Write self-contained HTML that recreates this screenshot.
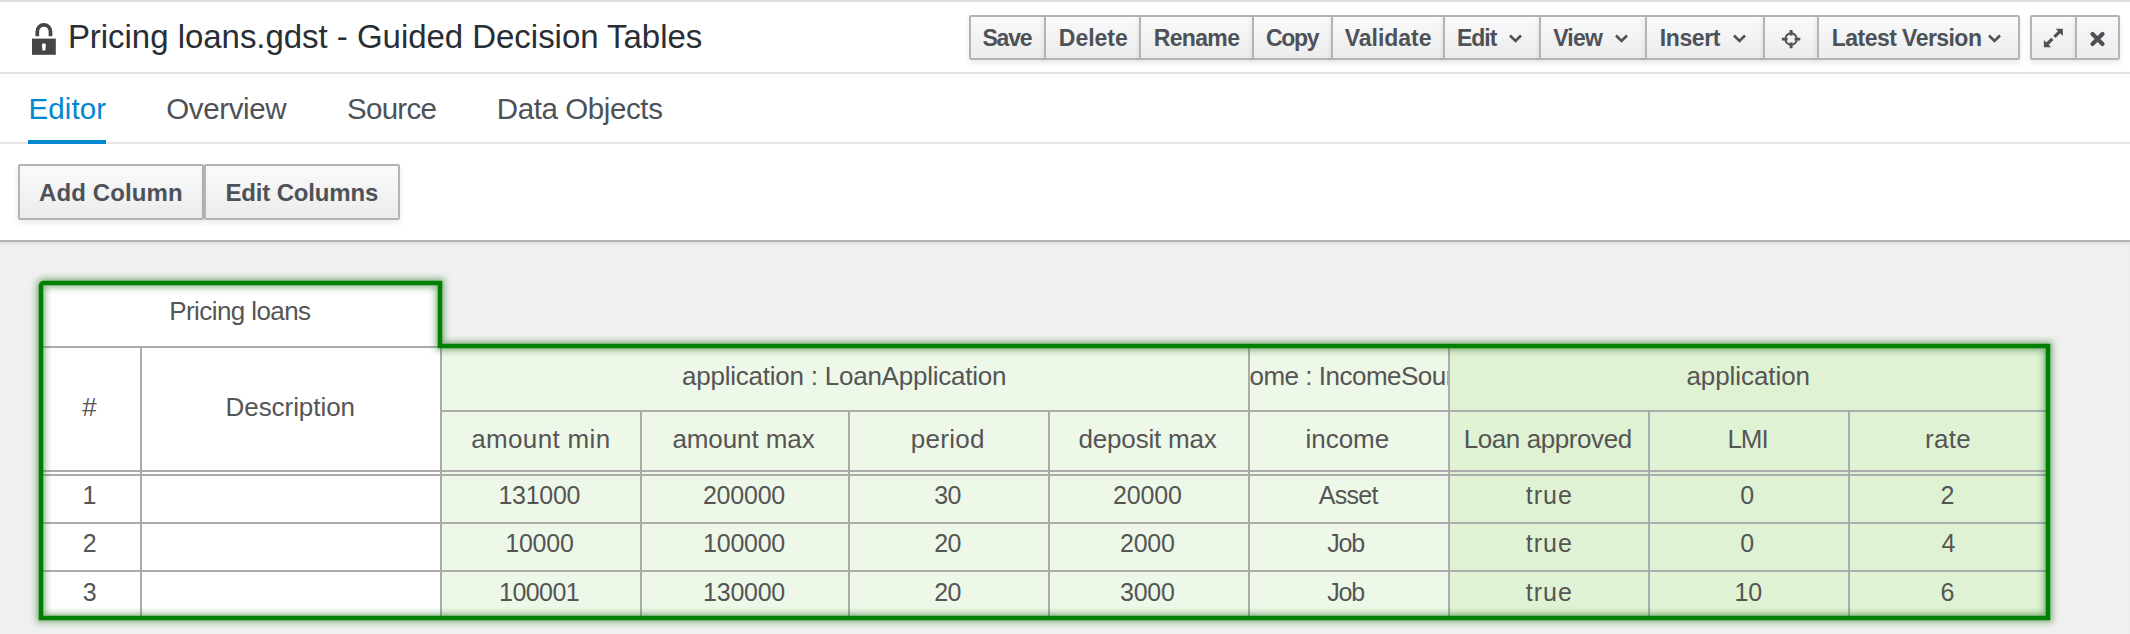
<!DOCTYPE html><html><head><meta charset="utf-8"><style>
*{box-sizing:border-box}
html,body{margin:0;padding:0}
body{width:2130px;height:634px;position:relative;overflow:hidden;background:#fff;font-family:"Liberation Sans",sans-serif}
.a{position:absolute}
.t{position:absolute;white-space:nowrap;line-height:1}
.b{position:absolute;border:2px solid #b4b4b4;background:linear-gradient(#fafafa,#ececec);box-shadow:0 3px 6px rgba(0,0,0,0.09)}
.bl{position:absolute;white-space:nowrap;line-height:1;color:#4d5258;font-weight:bold;font-size:23px}
</style></head><body>
<div class="a" style="left:0;top:0;width:2130px;height:2px;background:#dcdcdc"></div>
<div class="a" style="left:0;top:72px;width:2130px;height:2px;background:#e3e3e3"></div>
<svg class="a" style="left:0;top:0" width="70" height="70" viewBox="0 0 70 70">
<defs><filter id="lb" x="-50%" y="-50%" width="200%" height="200%"><feGaussianBlur stdDeviation="0.55"/></filter></defs>
<g filter="url(#lb)">
<path d="M37.3 36.2 V31.4 A6.6 6.6 0 0 1 50.5 31.4 V36.2" fill="none" stroke="#444" stroke-width="3.7"/>
<rect x="32" y="38.6" width="23.8" height="16.2" fill="#444"/>
<path d="M43.9 43.3 a2 2 0 0 1 2 2 L45.3 50.5 H42.5 L41.9 45.3 a2 2 0 0 1 2 -2 Z" fill="#fff"/>
</g>
</svg>
<div class="t" style="left:67.9px;top:20px;font-size:33px;letter-spacing:-0.036px;color:#292e34">Pricing loans.gdst - Guided Decision Tables</div>
<div class="b" style="left:969px;top:15px;width:77px;height:45px;border-radius:2px 0 0 2px"></div>
<div class="b" style="left:1044px;top:15px;width:97px;height:45px;border-radius:0"></div>
<div class="b" style="left:1139px;top:15px;width:115px;height:45px;border-radius:0"></div>
<div class="b" style="left:1252px;top:15px;width:81px;height:45px;border-radius:0"></div>
<div class="b" style="left:1331px;top:15px;width:114px;height:45px;border-radius:0"></div>
<div class="b" style="left:1443px;top:15px;width:98px;height:45px;border-radius:0"></div>
<div class="b" style="left:1539px;top:15px;width:108px;height:45px;border-radius:0"></div>
<div class="b" style="left:1645px;top:15px;width:120px;height:45px;border-radius:0"></div>
<div class="b" style="left:1763px;top:15px;width:56px;height:45px;border-radius:0"></div>
<div class="b" style="left:1817px;top:15px;width:203px;height:45px;border-radius:0 2px 2px 0"></div>
<div class="bl" style="left:982.5px;top:27px;letter-spacing:-1.233px">Save</div>
<div class="bl" style="left:1058.8px;top:27px;letter-spacing:-0.02px">Delete</div>
<div class="bl" style="left:1153.7px;top:27px;letter-spacing:-0.64px">Rename</div>
<div class="bl" style="left:1266.1px;top:27px;letter-spacing:-1.367px">Copy</div>
<div class="bl" style="left:1344.8px;top:27px;letter-spacing:-0.043px">Validate</div>
<div class="bl" style="left:1457.1px;top:27px;letter-spacing:-1.067px">Edit</div>
<svg class="a" style="left:1508px;top:30px" width="16" height="16" viewBox="0 0 16 16"><path d="M2 5.5 L7.5 11 L13 5.5" fill="none" stroke="#4d5258" stroke-width="2.6"/></svg>
<div class="bl" style="left:1553.2px;top:27px;letter-spacing:-0.8px">View</div>
<svg class="a" style="left:1614px;top:30px" width="16" height="16" viewBox="0 0 16 16"><path d="M2 5.5 L7.5 11 L13 5.5" fill="none" stroke="#4d5258" stroke-width="2.6"/></svg>
<div class="bl" style="left:1659.7px;top:27px;letter-spacing:-0.36px">Insert</div>
<svg class="a" style="left:1732px;top:30px" width="16" height="16" viewBox="0 0 16 16"><path d="M2 5.5 L7.5 11 L13 5.5" fill="none" stroke="#4d5258" stroke-width="2.6"/></svg>
<div class="bl" style="left:1831.8px;top:27px;letter-spacing:-0.546px">Latest Version</div>
<svg class="a" style="left:1987px;top:30px" width="16" height="16" viewBox="0 0 16 16"><path d="M2 5.5 L7.5 11 L13 5.5" fill="none" stroke="#4d5258" stroke-width="2.6"/></svg>
<svg class="a" style="left:1771px;top:19px" width="40" height="40" viewBox="0 0 40 40">
<circle cx="20.1" cy="20.1" r="5.8" fill="none" stroke="#4d5258" stroke-width="1.9"/>
<path d="M20.1 10.9 V16.6 M20.1 23.6 V29.3 M10.9 20.1 H16.6 M23.6 20.1 H29.3" stroke="#4d5258" stroke-width="2.9"/>
</svg>
<div class="b" style="left:2030px;top:15px;width:47px;height:45px;border-radius:2px 0 0 2px"></div>
<div class="b" style="left:2075px;top:15px;width:45px;height:45px;border-radius:0 2px 2px 0"></div>
<svg class="a" style="left:2036px;top:22px" width="34" height="32" viewBox="0 0 34 32">
<path d="M9.5 23.5 L16.4 16.8" stroke="#4d5258" stroke-width="3.2"/>
<path d="M18.4 14.8 L25 8.3" stroke="#4d5258" stroke-width="3.2"/>
<path d="M7.9 18 L7.9 25.3 L15.2 25.3 Z" fill="#4d5258"/>
<path d="M26.9 6.65 L19.6 6.65 L26.9 13.95 Z" fill="#4d5258"/>
</svg>
<svg class="a" style="left:2080px;top:22px" width="34" height="32" viewBox="0 0 34 32">
<path d="M12.5 12 L22.5 22 M22.5 12 L12.5 22" stroke="#4d5258" stroke-width="4.2" stroke-linecap="round"/>
</svg>
<div class="t" style="left:28.6px;top:94px;font-size:29.5px;letter-spacing:0.06px;color:#0088ce">Editor</div>
<div class="t" style="left:166.2px;top:94px;font-size:29.5px;letter-spacing:-0.357px;color:#4d5258">Overview</div>
<div class="t" style="left:347.0px;top:94px;font-size:29.5px;letter-spacing:-0.72px;color:#4d5258">Source</div>
<div class="t" style="left:496.8px;top:94px;font-size:29.5px;letter-spacing:-0.4px;color:#4d5258">Data Objects</div>
<div class="a" style="left:0;top:142px;width:2130px;height:2px;background:#e5e5e5"></div>
<div class="a" style="left:28px;top:140px;width:78px;height:4px;background:#0088ce"></div>
<div class="b" style="left:18px;top:164px;width:186px;height:56px;border-radius:2px"></div>
<div class="b" style="left:204px;top:164px;width:196px;height:56px;border-radius:2px"></div>
<div class="bl" style="left:39.0px;top:181px;font-size:24px;letter-spacing:0.111px">Add Column</div>
<div class="bl" style="left:225.5px;top:181px;font-size:24px;letter-spacing:-0.164px">Edit Columns</div>
<div class="a" style="left:0;top:240px;width:2130px;height:394px;background:#f0f0f0;border-top:2px solid #b3b3b3;box-shadow:inset 0 3px 3px -1px rgba(0,0,0,0.07)"></div>
<svg class="a" style="left:0;top:0" width="2130" height="634" viewBox="0 0 2130 634">
<defs><clipPath id="c1"><rect x="1250" y="346" width="198" height="64"/></clipPath>
<filter id="gl" x="-5%" y="-20%" width="110%" height="140%"><feGaussianBlur stdDeviation="3"/></filter><filter id="sb" x="-5%" y="-20%" width="110%" height="140%"><feGaussianBlur stdDeviation="0.7"/></filter></defs>
<g>
<rect x="41" y="283" width="400" height="64" fill="#ffffff"/>
<rect x="41" y="346" width="400" height="271" fill="#ffffff"/>
<rect x="440" y="346" width="808" height="271" fill="#eef8e8"/>
<rect x="1248" y="346" width="200" height="271" fill="#eef8e8"/>
<rect x="1448" y="346" width="600" height="271" fill="#e0f2d4"/>
<rect x="41" y="346" width="399" height="2" fill="#ababab"/>
<rect x="440" y="410" width="1608" height="2" fill="#ababab"/>
<rect x="41" y="470" width="2007" height="2" fill="#ababab"/>
<rect x="41" y="474" width="2007" height="2" fill="#ababab"/>
<rect x="41" y="522" width="2007" height="2" fill="#ababab"/>
<rect x="41" y="570" width="2007" height="2" fill="#ababab"/>
<rect x="140" y="346" width="2" height="271" fill="#ababab"/>
<rect x="440" y="346" width="2" height="271" fill="#ababab"/>
<rect x="640" y="410" width="2" height="207" fill="#ababab"/>
<rect x="848" y="410" width="2" height="207" fill="#ababab"/>
<rect x="1048" y="410" width="2" height="207" fill="#ababab"/>
<rect x="1248" y="346" width="2" height="271" fill="#ababab"/>
<rect x="1448" y="346" width="2" height="271" fill="#ababab"/>
<rect x="1648" y="410" width="2" height="207" fill="#ababab"/>
<rect x="1848" y="410" width="2" height="207" fill="#ababab"/>
</g>
<path d="M41 285.8 A2.8 2.8 0 0 1 43.8 283 L440 283 L440 346 L2048 346 L2048 618 L41 618 Z" fill="none" stroke="#1d6f1d" stroke-opacity="0.5" stroke-width="9" filter="url(#gl)"/>
<path d="M41 285.8 A2.8 2.8 0 0 1 43.8 283 L440 283 L440 346 L2048 346 L2048 618 L41 618 Z" fill="none" stroke="#008000" stroke-width="4.6" filter="url(#sb)"/>
</svg>
<div class="t" style="left:169.30px;top:297.99px;font-size:26px;letter-spacing:-0.592px;color:#555555">Pricing loans</div>
<div class="t" style="left:82.20px;top:393.99px;font-size:26px;letter-spacing:0.0px;color:#555555">#</div>
<div class="t" style="left:225.50px;top:394.24px;font-size:26px;letter-spacing:-0.05px;color:#555555">Description</div>
<div class="t" style="left:682.10px;top:362.59px;font-size:26px;letter-spacing:-0.239px;color:#555555">application : LoanApplication</div>
<div class="t" style="left:1686.40px;top:362.59px;font-size:26px;letter-spacing:-0.07px;color:#555555">application</div>
<div class="t" style="left:471.30px;top:425.79px;font-size:26px;letter-spacing:0.333px;color:#555555">amount min</div>
<div class="t" style="left:672.40px;top:425.79px;font-size:26px;letter-spacing:-0.089px;color:#555555">amount max</div>
<div class="t" style="left:910.70px;top:425.79px;font-size:26px;letter-spacing:0.32px;color:#555555">period</div>
<div class="t" style="left:1078.60px;top:425.79px;font-size:26px;letter-spacing:-0.2px;color:#555555">deposit max</div>
<div class="t" style="left:1305.60px;top:425.79px;font-size:26px;letter-spacing:-0.06px;color:#555555">income</div>
<div class="t" style="left:1463.70px;top:425.79px;font-size:26px;letter-spacing:-0.417px;color:#555555">Loan approved</div>
<div class="t" style="left:1727.40px;top:425.79px;font-size:26px;letter-spacing:-1.05px;color:#555555">LMI</div>
<div class="t" style="left:1925.00px;top:425.79px;font-size:26px;letter-spacing:0.267px;color:#555555">rate</div>
<div class="t" style="left:82.50px;top:483.24px;font-size:25px;letter-spacing:0.0px;color:#555555">1</div>
<div class="t" style="left:498.40px;top:483.24px;font-size:25px;letter-spacing:-0.28px;color:#555555">131000</div>
<div class="t" style="left:702.90px;top:483.24px;font-size:25px;letter-spacing:-0.22px;color:#555555">200000</div>
<div class="t" style="left:934.30px;top:483.24px;font-size:25px;letter-spacing:-0.6px;color:#555555">30</div>
<div class="t" style="left:1112.90px;top:483.24px;font-size:25px;letter-spacing:-0.1px;color:#555555">20000</div>
<div class="t" style="left:1318.70px;top:483.24px;font-size:25px;letter-spacing:-0.675px;color:#555555">Asset</div>
<div class="t" style="left:1525.80px;top:483.24px;font-size:25px;letter-spacing:1.0px;color:#555555">true</div>
<div class="t" style="left:1740.20px;top:483.24px;font-size:25px;letter-spacing:0.0px;color:#555555">0</div>
<div class="t" style="left:1940.40px;top:483.24px;font-size:25px;letter-spacing:0.0px;color:#555555">2</div>
<div class="t" style="left:82.70px;top:531.44px;font-size:25px;letter-spacing:0.0px;color:#555555">2</div>
<div class="t" style="left:505.30px;top:531.44px;font-size:25px;letter-spacing:-0.25px;color:#555555">10000</div>
<div class="t" style="left:703.10px;top:531.44px;font-size:25px;letter-spacing:-0.26px;color:#555555">100000</div>
<div class="t" style="left:934.30px;top:531.44px;font-size:25px;letter-spacing:-0.6px;color:#555555">20</div>
<div class="t" style="left:1120.10px;top:531.44px;font-size:25px;letter-spacing:-0.267px;color:#555555">2000</div>
<div class="t" style="left:1327.30px;top:531.44px;font-size:25px;letter-spacing:-1.2px;color:#555555">Job</div>
<div class="t" style="left:1525.80px;top:531.44px;font-size:25px;letter-spacing:1.0px;color:#555555">true</div>
<div class="t" style="left:1740.20px;top:531.44px;font-size:25px;letter-spacing:0.0px;color:#555555">0</div>
<div class="t" style="left:1941.40px;top:531.44px;font-size:25px;letter-spacing:0.0px;color:#555555">4</div>
<div class="t" style="left:82.70px;top:579.74px;font-size:25px;letter-spacing:0.0px;color:#555555">3</div>
<div class="t" style="left:499.10px;top:579.74px;font-size:25px;letter-spacing:-0.58px;color:#555555">100001</div>
<div class="t" style="left:703.10px;top:579.74px;font-size:25px;letter-spacing:-0.26px;color:#555555">130000</div>
<div class="t" style="left:934.30px;top:579.74px;font-size:25px;letter-spacing:-0.6px;color:#555555">20</div>
<div class="t" style="left:1120.10px;top:579.74px;font-size:25px;letter-spacing:-0.267px;color:#555555">3000</div>
<div class="t" style="left:1327.30px;top:579.74px;font-size:25px;letter-spacing:-1.2px;color:#555555">Job</div>
<div class="t" style="left:1525.80px;top:579.74px;font-size:25px;letter-spacing:1.0px;color:#555555">true</div>
<div class="t" style="left:1734.40px;top:579.74px;font-size:25px;letter-spacing:-0.1px;color:#555555">10</div>
<div class="t" style="left:1940.40px;top:579.74px;font-size:25px;letter-spacing:0.0px;color:#555555">6</div>
<div class="a" style="left:1250px;top:348px;width:198px;height:62px;overflow:hidden"><div class="t" style="left:-13.00px;top:14.59px;font-size:26px;letter-spacing:-0.5px;color:#555555">come : IncomeSource</div></div>
</body></html>
